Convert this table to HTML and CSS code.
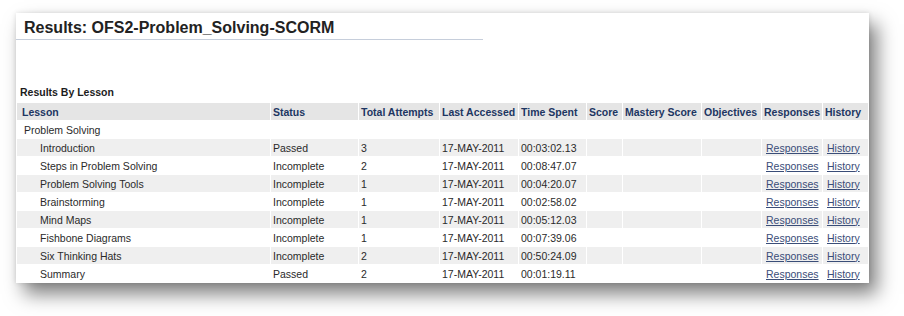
FILE: index.html
```html
<!DOCTYPE html>
<html>
<head>
<meta charset="utf-8">
<link rel="stylesheet" href="styles.css">
</head>
<body>
<div class="stage">
  <div class="panel">
    <h1 class="title">Results: OFS2-Problem_Solving-SCORM</h1>
    <div class="subtitle">Results By Lesson</div>
    <table class="results">
      <thead>
        <tr>
          <th class="c-lesson">Lesson</th>
          <th class="c-status">Status</th>
          <th class="c-att">Total Attempts</th>
          <th class="c-last">Last Accessed</th>
          <th class="c-time">Time Spent</th>
          <th class="c-score">Score</th>
          <th class="c-mastery">Mastery Score</th>
          <th class="c-obj">Objectives</th>
          <th class="c-resp">Responses</th>
          <th class="c-hist">History</th>
        </tr>
      </thead>
      <tbody>
        <tr class="group"><td class="lesson parent">Problem Solving</td><td></td><td></td><td></td><td></td><td></td><td></td><td></td><td></td><td></td></tr>
        <tr class="alt"><td class="lesson">Introduction</td><td>Passed</td><td>3</td><td>17-MAY-2011</td><td>00:03:02.13</td><td></td><td></td><td></td><td class="link"><a href="#">Responses</a></td><td class="link"><a href="#">History</a></td></tr>
        <tr><td class="lesson">Steps in Problem Solving</td><td>Incomplete</td><td>2</td><td>17-MAY-2011</td><td>00:08:47.07</td><td></td><td></td><td></td><td class="link"><a href="#">Responses</a></td><td class="link"><a href="#">History</a></td></tr>
        <tr class="alt"><td class="lesson">Problem Solving Tools</td><td>Incomplete</td><td>1</td><td>17-MAY-2011</td><td>00:04:20.07</td><td></td><td></td><td></td><td class="link"><a href="#">Responses</a></td><td class="link"><a href="#">History</a></td></tr>
        <tr><td class="lesson">Brainstorming</td><td>Incomplete</td><td>1</td><td>17-MAY-2011</td><td>00:02:58.02</td><td></td><td></td><td></td><td class="link"><a href="#">Responses</a></td><td class="link"><a href="#">History</a></td></tr>
        <tr class="alt"><td class="lesson">Mind Maps</td><td>Incomplete</td><td>1</td><td>17-MAY-2011</td><td>00:05:12.03</td><td></td><td></td><td></td><td class="link"><a href="#">Responses</a></td><td class="link"><a href="#">History</a></td></tr>
        <tr><td class="lesson">Fishbone Diagrams</td><td>Incomplete</td><td>1</td><td>17-MAY-2011</td><td>00:07:39.06</td><td></td><td></td><td></td><td class="link"><a href="#">Responses</a></td><td class="link"><a href="#">History</a></td></tr>
        <tr class="alt"><td class="lesson">Six Thinking Hats</td><td>Incomplete</td><td>2</td><td>17-MAY-2011</td><td>00:50:24.09</td><td></td><td></td><td></td><td class="link"><a href="#">Responses</a></td><td class="link"><a href="#">History</a></td></tr>
        <tr><td class="lesson">Summary</td><td>Passed</td><td>2</td><td>17-MAY-2011</td><td>00:01:19.11</td><td></td><td></td><td></td><td class="link"><a href="#">Responses</a></td><td class="link"><a href="#">History</a></td></tr>
      </tbody>
    </table>
  </div>
</div>
</body>
</html>
```

FILE: styles.css
```css
* { box-sizing: border-box; }
html, body {
  margin: 0;
  padding: 0;
  background: #ffffff;
}
body {
  font-family: "Liberation Sans", Arial, sans-serif;
  color: #1e1e1e;
}
.stage {
  height: 316px;
  padding: 13px 0 0 16px;
  overflow: hidden;
}
.panel {
  width: 853px;
  background: #ffffff;
  box-shadow: 8px 11px 18px rgba(0, 0, 0, 0.5), 0 0 5px rgba(0, 0, 0, 0.12);
}
.title {
  margin: 0;
  padding: 5px 0 1px 8px;
  width: 467px;
  font-size: 16px;
  line-height: 20px;
  font-weight: bold;
  color: #222222;
  border-bottom: 1px solid #c6cedb;
}
.subtitle {
  margin: 45px 0 3px 4px;
  font-size: 10.5px;
  line-height: 14px;
  font-weight: bold;
  color: #1c1c1c;
}
.results {
  width: 853px;
  table-layout: fixed;
  border-collapse: separate;
  border-spacing: 1px;
  font-size: 10.5px;
}
.results th,
.results td {
  height: 17px;
  padding: 0 2px;
  vertical-align: middle;
  text-align: left;
  white-space: nowrap;
  overflow: hidden;
}
.results th {
  background: #e5e5e5;
  color: #1d3662;
  font-weight: bold;
}
.results td {
  color: #2a2a2a;
}
.results th.c-lesson { width: 253px; padding-left: 5px; }
.c-status { width: 87px; }
.c-att { width: 80px; }
.c-last { width: 78px; }
.c-time { width: 67px; }
.c-score { width: 35px; }
.c-mastery { width: 78px; }
.c-obj { width: 59px; }
.c-resp { width: 60px; }
.c-hist { width: 45px; }
.results tr.alt td {
  background: #efefef;
}
.results td.lesson {
  padding-left: 23px;
}
.results td.parent {
  padding-left: 7px;
}
.results td.link {
  padding-left: 4px;
}
.results a {
  color: #3a4d78;
  text-decoration: underline;
}
```
